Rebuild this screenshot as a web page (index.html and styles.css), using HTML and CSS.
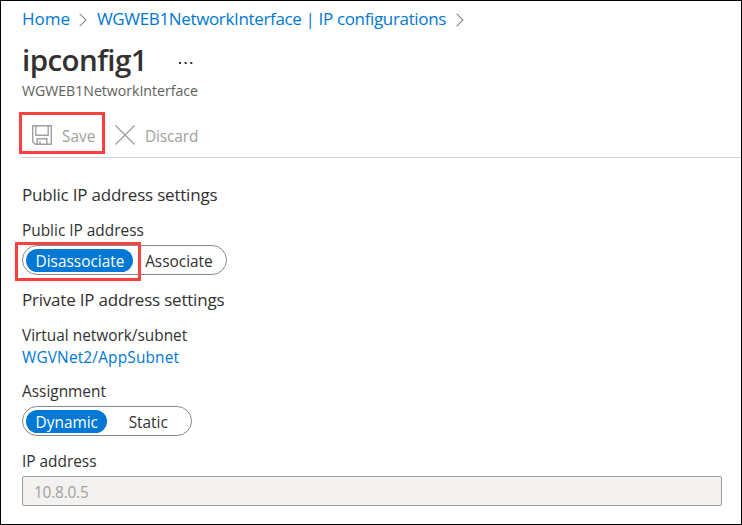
FILE: index.html
```
<!DOCTYPE html>
<html lang="en">
<head>
<meta charset="utf-8">
<title>ipconfig1</title>
<link rel="stylesheet" href="styles.css">
</head>
<body>
<main class="blade">
  <nav class="breadcrumb">
    <a href="#" class="home">Home</a>
    <svg class="chevron" width="8" height="14" viewBox="0 0 8 14"><path d="M.7 .8 7 7 .7 13.2"/></svg>
    <a href="#" class="crumb">WGWEB1NetworkInterface | IP configurations</a>
    <svg class="chevron" width="8" height="14" viewBox="0 0 8 14"><path d="M.7 .8 7 7 .7 13.2"/></svg>
  </nav>
  <header class="heading">
    <h1>ipconfig1</h1>
    <svg class="more" width="14" height="2" viewBox="0 0 14 2"><path d="M0 0h2v2H0zM5.7 0h2v2h-2zM11.3 0h2v2h-2z"/></svg>
  </header>
  <p class="subtitle">WGWEB1NetworkInterface</p>

  <div class="toolbar">
    <button class="command save">
      <svg width="20" height="20" viewBox="0 0 20 20"><path d="M.7.7h18.6v18.6H3.3L.7 16.7zM3.8 .7v9.6h12.4V.7M5.2 19.3v-5.6h9.6v5.6M8 19v-2.8"/></svg>
      <span>Save</span>
    </button>
    <button class="command discard">
      <svg width="20" height="20" viewBox="0 0 20 20"><path d="m.5.5 19 19M19.5.5l-19 19"/></svg>
      <span>Discard</span>
    </button>
  </div>

  <h2 class="section">Public IP address settings</h2>
  <div class="label">Public IP address</div>
  <div class="toggle association">
    <span class="option selected">Disassociate</span>
    <span class="option">Associate</span>
    <div class="highlight"></div>
  </div>

  <h2 class="section private">Private IP address settings</h2>
  <div class="label">Virtual network/subnet</div>
  <a href="#" class="subnet">WGVNet2/AppSubnet</a>
  <div class="label assignment">Assignment</div>
  <div class="toggle allocation">
    <span class="option selected">Dynamic</span>
    <span class="option">Static</span>
  </div>
  <div class="label address">IP address</div>
  <div class="field">10.8.0.5</div>
</main>
</body>
</html>
```
FILE: styles.css
```
* { box-sizing: border-box; }
body {
  margin: 0;
  font: 15.4px/24px "Open Sans", "Noto Sans", sans-serif;
  color: #323130;
  background: #fff;
}
h1, h2, p { margin: 0; }
a { color: #0078d4; text-decoration: none; }
.blade {
  height: 525px;
  padding: 6px 0 0 21px;
  border: 1px solid #000;
  overflow: hidden;
}
.breadcrumb {
  display: flex;
  align-items: center;
  height: 24px;
  font-size: 17px;
  line-height: 24px;
  white-space: nowrap;
}
.home { width: 57px; }
.crumb { width: 359px; margin-left: 10px; letter-spacing: -.35px; }
.chevron { fill: none; stroke: #8a8886; stroke-width: 1.1; margin-top: 2px; }
.heading { display: flex; height: 40px; margin-top: 9px; }
h1 { width: 157px; font-size: 29.5px; font-weight: 600; line-height: 40px; letter-spacing: -.55px; }
.more { margin-top: 22px; fill: #323130; }
.subtitle { height: 21px; font-size: 14.1px; line-height: 21px; color: #605e5c; }
.toolbar {
  display: flex;
  height: 57px;
  padding-top: 11px;
  border-bottom: 1px solid #d2d0ce;
}
.command {
  display: flex;
  align-items: center;
  height: 42px;
  padding: 4px 0 0;
  border: 0;
  background: none;
  font: inherit;
  color: #a19f9d;
}
.command svg { fill: none; stroke: #a19f9d; stroke-width: 1.4; margin-right: 10px; }
.command span { padding-top: 3px; }
.save { width: 86px; margin-left: -3px; padding-left: 10px; border: 3px solid #fa4141; }
.discard { margin-left: 10px; letter-spacing: -.1px; }
.section { margin-top: 24px; height: 24px; font-size: 17px; font-weight: 400; line-height: 26px; letter-spacing: -.21px; }
.label { height: 22px; margin-top: 13px; }
.toggle {
  position: relative;
  display: flex;
  height: 30px;
  margin-top: 4px;
  padding: 3px;
  border: 1px solid #8a8886;
  border-radius: 15px;
}
.option { height: 23px; padding-left: 2px; line-height: 25px; text-align: center; }
.selected { padding-left: 1px; border-radius: 12px; color: #fff; background: #0078d4; }
.association { width: 205px; }
.association .selected { width: 108px; }
.association .option:not(.selected) { width: 91px; }
.allocation { width: 170px; }
.allocation .selected { width: 82px; }
.allocation .option:not(.selected) { width: 83px; }
.highlight { position: absolute; left: -8px; top: -4px; width: 126px; height: 39px; border: 3px solid #fa4141; }
.private { margin-top: 12px; }
.subnet { display: block; height: 22px; letter-spacing: .18px; }
.assignment { margin-top: 12px; }
.address { margin-top: 14px; }
.field {
  width: 700px;
  height: 30px;
  margin-top: 4px;
  padding-left: 11px;
  border: 1px solid #a19f9d;
  border-radius: 2px;
  line-height: 31px;
  letter-spacing: -.2px;
  color: #a19f9d;
  background: #f3f2f1;
}
```
